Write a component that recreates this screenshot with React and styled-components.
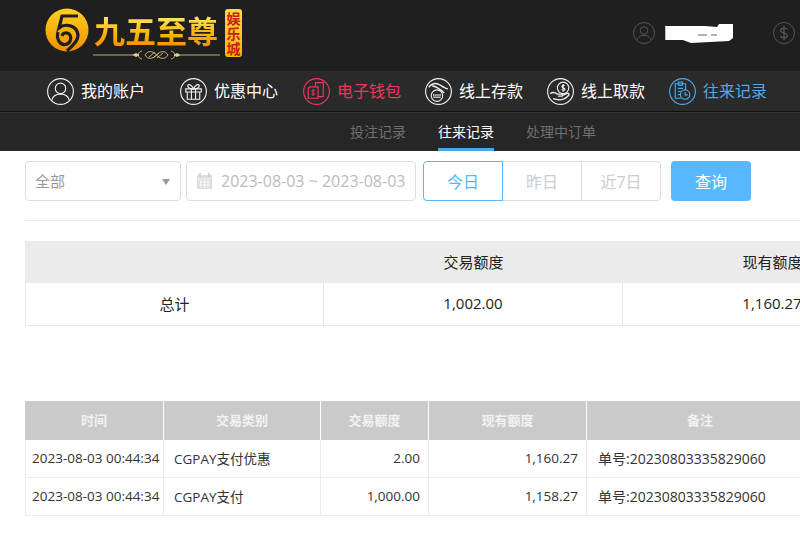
import { Fragment } from 'react';
import styled, { createGlobalStyle } from 'styled-components';

const GlobalStyle = createGlobalStyle`
  html, body {
    margin: 0;
    padding: 0;
    background: #fff;
    overflow: hidden;
  }
  body {
    width: 800px;
    height: 537px;
    font-family: "Open Sans", "Noto Sans CJK SC", sans-serif;
  }
`;

const Page = styled.div`
  width: 800px;
  height: 537px;
  overflow: hidden;
`;

const TopBar = styled.header`
  height: 71px;
  box-sizing: border-box;
  padding: 8px 5px 0 45px;
  display: flex;
  align-items: flex-start;
  background: #1f1f1f;
`;

const Logo = styled.div`
  display: flex;
  align-items: flex-start;
  gap: 5px;
`;

const LogoWords = styled.div`
  width: 124px;
  display: flex;
  flex-direction: column;
  align-items: center;
`;

const LogoTitle = styled.div`
  height: 36px;
  margin-top: 4px;
  font-family: "Noto Sans CJK SC", sans-serif;
  font-size: 31px;
  line-height: 36px;
  font-weight: 700;
  white-space: nowrap;
  background: linear-gradient(180deg, #ffe36a 15%, #ffb400 60%, #ff9400 90%);
  -webkit-background-clip: text;
  background-clip: text;
  color: transparent;
`;

const LogoOrnament = styled.svg`
  flex: none;
  margin-top: 2px;
`;

const LogoBadge = styled.div`
  width: 17px;
  height: 48px;
  margin-left: 2px;
  margin-top: 1px;
  box-sizing: border-box;
  border-radius: 3px;
  background: linear-gradient(180deg, #ffd84a, #ffb400);
  color: #c8200f;
  font-size: 14px;
  line-height: 15px;
  font-weight: 700;
  text-align: center;
  padding-top: 2px;
`;

const Account = styled.div`
  margin-left: auto;
  margin-top: 14px;
  display: flex;
  align-items: center;
`;

const AccountName = styled.svg`
  margin: 0 40px 0 10px;
  display: block;
`;

const MainNav = styled.nav`
  height: 41px;
  box-sizing: border-box;
  padding-left: 47px;
  display: flex;
  align-items: center;
  background: #2a2a2a;
  border-bottom: 1px solid #111;
`;

const NavItem = styled.a`
  width: ${(p) => p.$width}px;
  flex: none;
  display: flex;
  align-items: center;
  gap: 7px;
  font-size: 16px;
  line-height: 24px;
  color: ${(p) => p.$color || '#fff'};
`;

const SubNav = styled.div`
  height: 39px;
  box-sizing: border-box;
  padding-left: 350px;
  display: flex;
  gap: 32px;
  background: #262626;
  border-top: 1px solid #333;
`;

const SubItem = styled.a`
  height: 38px;
  box-sizing: border-box;
  padding-top: 8px;
  font-size: 14px;
  line-height: 21px;
  color: ${(p) => (p.$active ? '#fff' : '#6f6f6f')};
  border-bottom: 3px solid ${(p) => (p.$active ? '#4aa8e8' : 'transparent')};
`;

const Content = styled.main`
  padding: 10px 0 0 25px;
  width: 1000px;
`;

const Filters = styled.div`
  display: flex;
  height: 40px;
  align-items: stretch;
`;

const Select = styled.div`
  width: 156px;
  box-sizing: border-box;
  padding: 0 10px 2px 9px;
  display: flex;
  align-items: center;
  justify-content: space-between;
  border: 1px solid #ddd;
  border-radius: 4px;
  font-size: 15px;
  color: #999;
`;

const Caret = styled.span`
  width: 0;
  height: 0;
  border-left: 4px solid transparent;
  border-right: 4px solid transparent;
  border-top: 6px solid #999;
  margin-top: 3px;
`;

const DateBox = styled.div`
  width: 230px;
  margin-left: 5px;
  box-sizing: border-box;
  padding-left: 9px;
  display: flex;
  align-items: center;
  gap: 8px;
  border: 1px solid #ddd;
  border-radius: 4px;
  font-size: 16px;
  color: #bbb;
  white-space: nowrap;
`;

const RangeGroup = styled.div`
  margin-left: 7px;
  display: flex;
`;

const RangeButton = styled.div`
  width: 80px;
  margin-left: ${(p) => (p.$active ? '0' : '-1px')};
  box-sizing: border-box;
  display: flex;
  align-items: center;
  justify-content: center;
  font-size: 16px;
  color: ${(p) => (p.$active ? '#57b8ff' : '#ccc')};
  border: 1px solid ${(p) => (p.$active ? '#57b8ff' : '#ddd')};
  border-radius: ${(p) => (p.$active ? '4px 0 0 4px' : p.$last ? '0 4px 4px 0' : '0')};
  position: relative;
  z-index: ${(p) => (p.$active ? 1 : 0)};
`;

const QueryButton = styled.div`
  width: 80px;
  margin-left: 10px;
  display: flex;
  align-items: center;
  justify-content: center;
  background: #57b8ff;
  border-radius: 4px;
  color: #fff;
  font-size: 16px;
`;

const Divider = styled.div`
  margin-top: 19px;
  height: 1px;
  background: #ebebeb;
`;

const Summary = styled.div`
  margin-top: 20px;
  display: grid;
  grid-template-columns: 299px 299px 299px;
`;

const SummaryHead = styled.div`
  height: 42px;
  box-sizing: border-box;
  padding-bottom: 2px;
  background: #ebebeb;
  display: flex;
  align-items: center;
  justify-content: center;
  font-size: 15px;
  color: #222;
`;

const SummaryCell = styled.div`
  height: 43px;
  box-sizing: border-box;
  padding-bottom: 2px;
  display: flex;
  align-items: center;
  justify-content: center;
  font-size: 15px;
  color: #222;
  border-bottom: 1px solid #e8e8e8;
  border-right: 1px solid #e8e8e8;
  border-left: ${(p) => (p.$first ? '1px solid #e8e8e8' : 'none')};
`;

const Records = styled.div`
  margin-top: 75px;
  display: grid;
  grid-template-columns: 139px 157px 108px 158px 227px;
`;

const RecordHead = styled.div`
  height: 39px;
  padding-bottom: 2px;
  background: #cacaca;
  border-right: 1px solid #fff;
  box-sizing: border-box;
  display: flex;
  align-items: center;
  justify-content: center;
  font-size: 13px;
  font-weight: 700;
  color: #f2f2f2;
`;

const RecordCell = styled.div`
  height: 38px;
  box-sizing: border-box;
  display: flex;
  align-items: center;
  justify-content: ${(p) => (p.$right ? 'flex-end' : 'flex-start')};
  padding: ${(p) => (p.$right ? '0 8px 2px 0' : p.$time ? '0 0 2px 6px' : p.$note ? '0 0 2px 11px' : '0 0 2px 10px')};
  font-size: ${(p) => (p.$note ? '14px' : '13.5px')};
  color: #333;
  white-space: nowrap;
  border-bottom: 1px solid #ececec;
  border-right: 1px solid #ececec;
  border-left: ${(p) => (p.$time ? '1px solid #ececec' : 'none')};
`;

function CircleIcon({ color, children }) {
  return (
    <svg width="27" height="27" viewBox="0 0 26 26" fill="none" stroke={color} strokeWidth="1.1">
      <circle cx="13" cy="13" r="12.4" />
      {children}
    </svg>
  );
}

function LogoMark() {
  return (
    <svg width="44" height="44" viewBox="0 0 44 44">
      <defs>
        <linearGradient id="coin" x1="0" y1="0" x2="0" y2="1">
          <stop offset="0" stopColor="#ffd21e" />
          <stop offset="1" stopColor="#ef8f00" />
        </linearGradient>
      </defs>
      <circle cx="22" cy="22" r="21.5" fill="url(#coin)" />
      <g fill="none" stroke="#1f1f1f" strokeWidth="3.2">
        <path d="M33 8 H17 L14 20 C20 15 32 17 33 27 C33.5 33 27 38 22 43" />
        <path d="M13 24 C11 31 15 37 20 36.5 C25 36 27 31 25 27 C23 24 18 24 17 28" />
      </g>
    </svg>
  );
}

function Ornament() {
  return (
    <LogoOrnament width="127" height="10" viewBox="0 0 127 10" fill="none" stroke="#e6d28c" strokeWidth="0.8">
      <path d="M0 5 H40 M87 5 H127" />
      <path d="M40 5 l3-1.5 3 1.5-3 1.5z M81 5 l3-1.5 3 1.5-3 1.5z" fill="#e6d28c" />
      <path d="M49 1 C44 2 44 8 49 9 M78 1 C83 2 83 8 78 9" />
      <path d="M52 5 C55 0 60 1 63.5 5 C67 9 72 10 75 5 C72 0 67 1 63.5 5 C60 9 55 10 52 5z" />
      <path d="M56 7 L62 2 M60 8 L66 3 M64 8 L70 3" />
    </LogoOrnament>
  );
}

function RedactedName() {
  return (
    <AccountName width="68" height="19" viewBox="0 0 68 19">
      <path d="M0 2 H40 L52 3 L54 0 H68 V14 L64 17 L26 19 L18 16 H0z" fill="#fff" />
      <path d="M0 3 V16" stroke="#3f8fe0" strokeWidth="1" />
      <path d="M33 11 H42 M46 11 H52" stroke="#666" strokeWidth="1" />
    </AccountName>
  );
}

function SmallUser() {
  return (
    <svg width="22" height="22" viewBox="0 0 22 22" fill="none" stroke="#555" strokeWidth="1">
      <circle cx="11" cy="11" r="10.5" />
      <circle cx="11" cy="8.5" r="3.8" />
      <path d="M4 18 C5 14 8 13.5 11 13.5 C14 13.5 17 14 18 18" />
    </svg>
  );
}

function SmallDollar() {
  return (
    <svg width="22" height="22" viewBox="0 0 22 22" fill="none" stroke="#555" strokeWidth="1">
      <circle cx="11" cy="11" r="10.5" />
      <path d="M14.5 7.5 C13.5 5.8 8 5.5 7.7 8.5 C7.5 11.5 14.5 10.5 14.4 13.8 C14.2 16.5 8.5 16.2 7.3 14.2 M11 3.8 V18.2" strokeWidth="1.3" />
    </svg>
  );
}

function CalendarIcon() {
  return (
    <svg width="17" height="18" viewBox="0 0 17 18" fill="#ddd">
      <path d="M1 3 H16 V17 H1z" />
      <path d="M4 1 V5 M13 1 V5" stroke="#ccc" strokeWidth="1.6" />
      <path d="M2 7 H15 M3 10 H14 M3 13 H14 M5 8 V16 M8.5 8 V16 M12 8 V16" stroke="#fff" strokeWidth="0.8" />
    </svg>
  );
}

const navItems = [
  {
    label: '我的账户',
    width: 133,
    icon: (
      <>
        <circle cx="13" cy="10" r="5" />
        <path d="M4.5 21.5 C5.5 17 9 15.5 13 15.5 C17 15.5 20.5 17 21.5 21.5" />
      </>
    ),
  },
  {
    label: '优惠中心',
    width: 123,
    icon: (
      <>
        <path d="M5.5 10.5 H20.5 V13.5 H5.5z M7 13.5 V20.5 H19 V13.5 M11 10.5 V20.5 M15 10.5 V20.5" />
        <path d="M13 10.5 C10 4.5 6 6 8 9 C9 10.5 11 10.5 13 10.5 C15 10.5 17 10.5 18 9 C20 6 16 4.5 13 10.5z" />
      </>
    ),
  },
  {
    label: '电子钱包',
    width: 122,
    color: '#f0365f',
    icon: (
      <>
        <path d="M12 8.5 V4.5 H19.5 V18 H14.5" />
        <path d="M5 11 C5 9.5 6 8.5 7.5 8.5 H14.5 V19.5 H5z" />
        <path d="M11.5 12 C10 11 8 11.5 8.5 13 C9 14.5 11.5 14 11 15.5 C10.5 16.8 8.5 16.3 8 15.5 M9.8 11 V17" strokeWidth="0.9" />
      </>
    ),
  },
  {
    label: '线上存款',
    width: 122,
    icon: (
      <>
        <path d="M3.5 9 C8 3.5 12 5 15 7 C17 8.2 20 10 22 10.5 M7 7.5 C11 8.5 15 11 18.5 14.5" strokeWidth="1.4" />
        <circle cx="11.5" cy="17" r="5.5" />
        <path d="M8.5 17.5 V15.5 M10.5 17.5 V15.5 M12.5 17.5 V15.5 M14.5 17.5 V15.5 M8 18.5 H15" />
      </>
    ),
  },
  {
    label: '线上取款',
    width: 122,
    icon: (
      <>
        <circle cx="15.5" cy="9.5" r="5.5" />
        <path d="M17 7.5 C15.5 6.5 14 7.5 14.5 8.8 C15 10 17.5 9.5 17.3 11 C17 12.3 15 12 14 11.2 M15.5 5.8 V13.2" />
        <path d="M3 15 C6 13 8 14 10 15.5 H14 C15.5 15.5 15.5 17.5 14 17.5 H10.5 M14.5 17 L20 14.5 C21.5 14.5 21.5 16 20.5 17 C18 19.5 15 21 12 21 C10 21 8 20 6 20" strokeWidth="1.3" />
      </>
    ),
  },
  {
    label: '往来记录',
    width: 122,
    color: '#4aa9ec',
    icon: (
      <>
        <path d="M11.5 19.5 H6 V5.5 H16 V11.5 M9 3.8 H13 V7 H9z M8.5 10 H13.5 M8.5 13 H11.5 M8.5 16 H10.5" />
        <circle cx="15.5" cy="16" r="4.5" />
        <path d="M15.5 13.5 V16.3 H18" />
      </>
    ),
  },
];

const records = [
  ['2023-08-03 00:44:34', 'CGPAY支付优惠', '2.00', '1,160.27', '单号:20230803335829060'],
  ['2023-08-03 00:44:34', 'CGPAY支付', '1,000.00', '1,158.27', '单号:20230803335829060'],
];

export default function App() {
  return (
    <Page>
      <GlobalStyle />
      <TopBar>
        <Logo>
          <LogoMark />
          <LogoWords>
            <LogoTitle>九五至尊</LogoTitle>
            <Ornament />
          </LogoWords>
          <LogoBadge>娱乐城</LogoBadge>
        </Logo>
        <Account>
          <SmallUser />
          <RedactedName />
          <SmallDollar />
        </Account>
      </TopBar>
      <MainNav>
        {navItems.map((item) => (
          <NavItem key={item.label} $width={item.width} $color={item.color}>
            <CircleIcon color={item.color || '#eee'}>{item.icon}</CircleIcon>
            {item.label}
          </NavItem>
        ))}
      </MainNav>
      <SubNav>
        <SubItem>投注记录</SubItem>
        <SubItem $active>往来记录</SubItem>
        <SubItem>处理中订单</SubItem>
      </SubNav>
      <Content>
        <Filters>
          <Select>
            全部
            <Caret />
          </Select>
          <DateBox>
            <CalendarIcon />
            2023-08-03 ~ 2023-08-03
          </DateBox>
          <RangeGroup>
            <RangeButton $active>今日</RangeButton>
            <RangeButton>昨日</RangeButton>
            <RangeButton $last>近7日</RangeButton>
          </RangeGroup>
          <QueryButton>查询</QueryButton>
        </Filters>
        <Divider />
        <Summary>
          <SummaryHead />
          <SummaryHead>交易额度</SummaryHead>
          <SummaryHead>现有额度</SummaryHead>
          <SummaryCell $first>总计</SummaryCell>
          <SummaryCell>1,002.00</SummaryCell>
          <SummaryCell>1,160.27</SummaryCell>
        </Summary>
        <Records>
          <RecordHead>时间</RecordHead>
          <RecordHead>交易类别</RecordHead>
          <RecordHead>交易额度</RecordHead>
          <RecordHead>现有额度</RecordHead>
          <RecordHead>备注</RecordHead>
          {records.map((row) => (
            <Fragment key={row[2]}>
              <RecordCell $time>{row[0]}</RecordCell>
              <RecordCell>{row[1]}</RecordCell>
              <RecordCell $right>{row[2]}</RecordCell>
              <RecordCell $right>{row[3]}</RecordCell>
              <RecordCell $note>{row[4]}</RecordCell>
            </Fragment>
          ))}
        </Records>
      </Content>
    </Page>
  );
}
